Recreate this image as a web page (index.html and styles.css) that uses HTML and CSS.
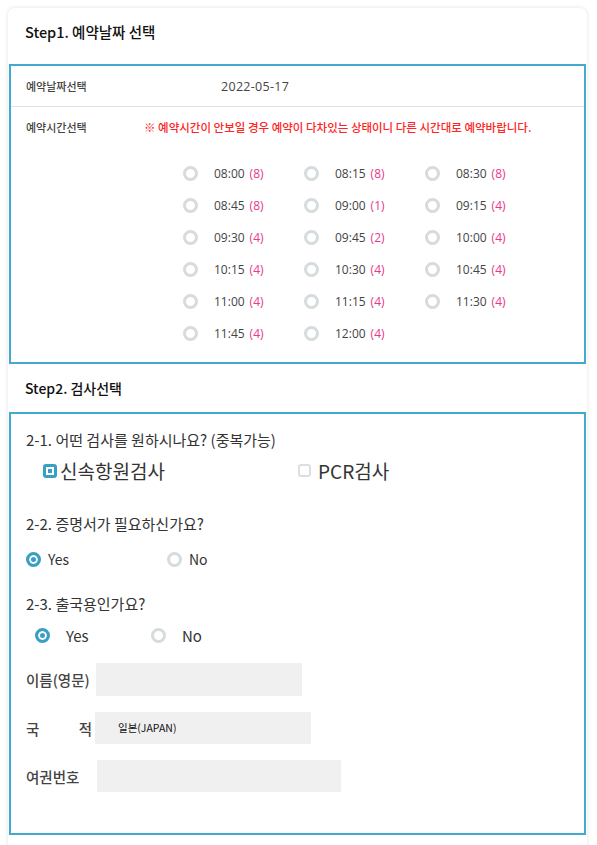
FILE: index.html
```html
<!DOCTYPE html>
<html>
<head>
    <title>예약</title>
    <link rel="stylesheet" href="styles.css">
</head>
<body>
    <div class="card">
        <div class="step-title first">Step1. 예약날짜 선택</div>
        <div class="box box-date">
            <div class="row row-date">
                <div class="row-label">예약날짜선택</div>
                <div class="date-value">2022-05-17</div>
            </div>
            <div class="row row-time">
                <div class="row-head">
                    <div class="row-label">예약시간선택</div>
                    <div class="notice">※ 예약시간이 안보일 경우 예약이 다차있는 상태이니 다른 시간대로 예약바랍니다.</div>
                </div>
                <div class="time-grid">
                    <label class="time"><span class="radio"></span><span class="t">08:00</span><span class="cnt">(8)</span></label>
                    <label class="time"><span class="radio"></span><span class="t">08:15</span><span class="cnt">(8)</span></label>
                    <label class="time"><span class="radio"></span><span class="t">08:30</span><span class="cnt">(8)</span></label>
                    <label class="time"><span class="radio"></span><span class="t">08:45</span><span class="cnt">(8)</span></label>
                    <label class="time"><span class="radio"></span><span class="t">09:00</span><span class="cnt">(1)</span></label>
                    <label class="time"><span class="radio"></span><span class="t">09:15</span><span class="cnt">(4)</span></label>
                    <label class="time"><span class="radio"></span><span class="t">09:30</span><span class="cnt">(4)</span></label>
                    <label class="time"><span class="radio"></span><span class="t">09:45</span><span class="cnt">(2)</span></label>
                    <label class="time"><span class="radio"></span><span class="t">10:00</span><span class="cnt">(4)</span></label>
                    <label class="time"><span class="radio"></span><span class="t">10:15</span><span class="cnt">(4)</span></label>
                    <label class="time"><span class="radio"></span><span class="t">10:30</span><span class="cnt">(4)</span></label>
                    <label class="time"><span class="radio"></span><span class="t">10:45</span><span class="cnt">(4)</span></label>
                    <label class="time"><span class="radio"></span><span class="t">11:00</span><span class="cnt">(4)</span></label>
                    <label class="time"><span class="radio"></span><span class="t">11:15</span><span class="cnt">(4)</span></label>
                    <label class="time"><span class="radio"></span><span class="t">11:30</span><span class="cnt">(4)</span></label>
                    <label class="time"><span class="radio"></span><span class="t">11:45</span><span class="cnt">(4)</span></label>
                    <label class="time"><span class="radio"></span><span class="t">12:00</span><span class="cnt">(4)</span></label>
                </div>
            </div>
        </div>

        <div class="step-title second">Step2. 검사선택</div>
        <div class="box box-test">
            <div class="question">2-1. 어떤 검사를 원하시나요? (중복가능)</div>
            <div class="checks">
                <label class="check-item first-check"><span class="check checked"></span>신속항원검사</label>
                <label class="check-item"><span class="check"></span>PCR검사</label>
            </div>

            <div class="question q2">2-2. 증명서가 필요하신가요?</div>
            <div class="options opt-cert">
                <label class="opt opt-yes"><span class="radio on"></span>Yes</label>
                <label class="opt"><span class="radio"></span>No</label>
            </div>

            <div class="question q3">2-3. 출국용인가요?</div>
            <div class="options opt-exit">
                <label class="opt opt-yes"><span class="radio on"></span>Yes</label>
                <label class="opt"><span class="radio"></span>No</label>
            </div>

            <div class="field field-name">
                <div class="field-label">이름(영문)</div>
                <div class="input input-name"></div>
            </div>
            <div class="field field-nation">
                <div class="field-label spread"><span>국</span><span>적</span></div>
                <div class="input input-nation">일본(JAPAN)</div>
            </div>
            <div class="field field-passport">
                <div class="field-label">여권번호</div>
                <div class="input input-passport"></div>
            </div>
        </div>
    </div>
</body>
</html>
```

FILE: styles.css
```css
body {
    margin: 0;
    padding: 8px 10px 0 8px;
    background: #ffffff;
    font-family: "Open Sans", "Noto Sans CJK KR", sans-serif;
    color: #333;
}
.card {
    background: white;
    border-radius: 7px 7px 0 0;
    box-shadow: 0 0 4px rgba(0,0,0,0.12);
    padding-bottom: 20px;
}
.step-title {
    font-family: "Noto Sans CJK KR", sans-serif;
    font-weight: 500;
    color: #111;
    padding: 0 17px;
}
.step-title.first {
    font-size: 14.5px;
    height: 56px;
    line-height: 48px;
}
.step-title.second {
    font-size: 14px;
    height: 48px;
    line-height: 48px;
}
.box {
    border: 2px solid #44a9d1;
    margin: 0 1px;
}

/* step1 */
.row-date {
    display: flex;
    align-items: center;
    height: 40px;
    border-bottom: 1px solid #e2e2e2;
}
.row-label {
    font-family: "Noto Sans CJK KR", sans-serif;
    font-size: 11px;
    font-weight: 500;
    color: #444;
    padding-left: 15px;
}
.row-date .row-label {
    width: 195px;
}
.date-value {
    font-size: 12.5px;
    letter-spacing: 0.3px;
    color: #444;
}
.row-head {
    display: flex;
    align-items: center;
    padding-top: 12px;
}
.row-head .row-label {
    width: 118px;
}
.notice {
    font-family: "Noto Sans CJK KR", sans-serif;
    font-size: 11.5px;
    font-weight: 500;
    color: #ff2525;
}
.time-grid {
    display: grid;
    grid-template-columns: repeat(3, 121px);
    grid-auto-rows: 32px;
    padding: 22px 0 13px 172px;
}
.time {
    display: flex;
    align-items: center;
    font-size: 12px;
    color: #444;
}
.time .radio {
    margin-right: 16px;
}
.time .cnt {
    color: #e8378c;
    margin-left: 5px;
}
.radio {
    display: inline-block;
    width: 9px;
    height: 9px;
    border: 3px solid #d6dbde;
    border-radius: 50%;
    background: white;
    flex: none;
}
.radio.on {
    border-color: #3a9fc4;
    background: #3a9fc4;
    box-shadow: inset 0 0 0 2px #fff;
}

/* step2 */
.box-test {
    padding: 16px 15px 41px;
    font-family: "Noto Sans CJK KR", sans-serif;
}
.question {
    font-size: 15px;
    color: #333;
    line-height: 20px;
}
.checks {
    display: flex;
    align-items: center;
    margin-top: 7px;
    padding-left: 17px;
}
.check-item {
    display: flex;
    align-items: center;
    font-size: 19px;
    color: #333;
}
.first-check {
    width: 255px;
}
.check {
    display: inline-block;
    width: 9px;
    height: 9px;
    border: 2px solid #dcdfe2;
    border-radius: 3px;
    margin-right: 7px;
    background: white;
}
.check.checked {
    width: 8px;
    height: 8px;
    border: 3px solid #3a9fc4;
    background: #3a9fc4;
    box-shadow: inset 0 0 0 2px #fff;
    margin-right: 3px;
}
.q2 {
    margin-top: 30px;
}
.q3 {
    margin-top: 25px;
}
.options {
    display: flex;
    align-items: center;
    font-size: 14px;
    color: #333;
}
.opt {
    display: flex;
    align-items: center;
}
.opt-cert {
    margin-top: 15px;
}
.opt-cert .radio {
    margin-right: 7px;
}
.opt-cert .opt-yes {
    width: 141px;
}
.opt-exit {
    margin-top: 11px;
    padding-left: 9px;
    font-size: 15px;
}
.opt-exit .radio {
    margin-right: 16px;
}
.opt-exit .opt-yes {
    width: 116px;
}
.field {
    display: flex;
    align-items: center;
    font-size: 14.5px;
}
.field-label {
    font-weight: 500;
    color: #444;
}
.input {
    background: #f0f0f0;
    height: 32px;
}
.field-name {
    margin-top: 17px;
}
.field-name .input {
    width: 206px;
    height: 33px;
    margin-left: 6px;
}
.field-nation {
    margin-top: 16px;
}
.spread {
    display: flex;
    justify-content: space-between;
    width: 66px;
}
.input-nation {
    width: 216px;
    margin-left: 3px;
    line-height: 32px;
    padding-left: 23px;
    box-sizing: border-box;
    font-size: 10.5px;
    color: #111;
    font-weight: 400;
}
.field-passport {
    margin-top: 16px;
}
.field-passport .input {
    width: 244px;
    margin-left: 18px;
}
```
